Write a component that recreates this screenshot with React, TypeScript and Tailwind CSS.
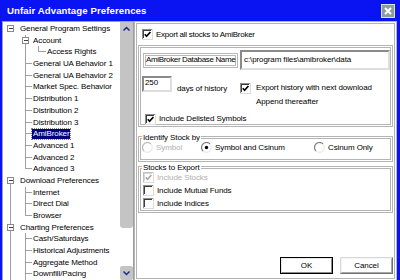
import React from 'react';

type Row = { t: string; l: 0 | 1 | 2; box?: boolean; last?: boolean; sel?: boolean };

const rows: Row[] = [
  { t: 'General Program Settings', l: 0, box: true },
  { t: 'Account', l: 1, box: true },
  { t: 'Access Rights', l: 2, last: true },
  { t: 'General UA Behavior 1', l: 1 },
  { t: 'General UA Behavior 2', l: 1 },
  { t: 'Market Spec. Behavior', l: 1 },
  { t: 'Distribution 1', l: 1 },
  { t: 'Distribution 2', l: 1 },
  { t: 'Distribution 3', l: 1 },
  { t: 'AmiBroker', l: 1, sel: true },
  { t: 'Advanced 1', l: 1 },
  { t: 'Advanced 2', l: 1 },
  { t: 'Advanced 3', l: 1, last: true },
  { t: 'Download Preferences', l: 0, box: true },
  { t: 'Internet', l: 1 },
  { t: 'Direct Dial', l: 1 },
  { t: 'Browser', l: 1, last: true },
  { t: 'Charting Preferences', l: 0, box: true },
  { t: 'Cash/Saturdays', l: 1 },
  { t: 'Historical Adjustments', l: 1 },
  { t: 'Aggregate Method', l: 1 },
  { t: 'Downfill/Pacing', l: 1 },
];

const LINE = '#a0a0a0';
const H = 11.7;

function TreeRow({ r, i }: { r: Row; i: number }) {
  const w = r.l === 0 ? 16 : r.l === 1 ? 29 : 43;
  const c = H / 2;
  const rootLine = i >= 13;
  return (
    <div className="flex items-center h-[11.7px]">
      <svg width={w} height={H} className="shrink-0" shapeRendering="crispEdges">
        {rootLine && (
          <line x1="7.5" x2="7.5" y1={i === 13 ? c : 0} y2={H} stroke={LINE} />
        )}
        {r.l >= 1 && (
          <line x1="22.5" x2="22.5" y1={0} y2={r.l === 1 && r.last ? c : H} stroke={LINE} />
        )}
        {r.l === 1 && !r.box && <line x1="22.5" x2="29" y1={c} y2={c} stroke={LINE} />}
        {r.l === 2 && (
          <>
            <line x1="35.5" x2="35.5" y1={0} y2={c} stroke={LINE} />
            <line x1="35.5" x2="43" y1={c} y2={c} stroke={LINE} />
          </>
        )}
        {r.box && (
          <g>
            <rect x={r.l === 0 ? 4.5 : 19.5} y={c - 3} width="6" height="6" fill="#fff" stroke="#8a8a8a" />
            <line x1={r.l === 0 ? 6 : 21} x2={r.l === 0 ? 10 : 25} y1={c} y2={c} stroke="#404040" />
          </g>
        )}
      </svg>
      {r.sel ? (
        <span className="bg-[#000080] text-white px-[1px] leading-[10px] outline-1 outline-dotted outline-[#808080]">
          {r.t}
        </span>
      ) : (
        <span className="ml-[1px] text-black">{r.t}</span>
      )}
    </div>
  );
}

function Check({ checked, disabled }: { checked?: boolean; disabled?: boolean }) {
  return (
    <svg width="11" height="11" viewBox="0 0 11 11" className="shrink-0" shapeRendering="crispEdges">
      <rect x="0.5" y="0.5" width="10" height="10" fill="#fff" stroke="#dcdcdc" />
      <path d="M0.5 10V0.5H10" fill="none" stroke={disabled ? '#c0c0c0' : '#8c8c8c'} />
      <path d="M1.5 9V1.5H9" fill="none" stroke={disabled ? '#d8d8d8' : '#3c3c3c'} />
      {checked && (
        <path
          d="M2.8 5.2L4.6 7.2L8.4 3"
          fill="none"
          stroke={disabled ? '#a8a8a8' : '#000'}
          strokeWidth="1.7"
          shapeRendering="auto"
        />
      )}
    </svg>
  );
}

function Radio({ checked, disabled }: { checked?: boolean; disabled?: boolean }) {
  return (
    <svg width="11" height="11" viewBox="0 0 11 11" className="shrink-0">
      <circle cx="5.5" cy="5.5" r="4.8" fill="#fff" stroke="#e2e2e2" />
      <path d="M9.04 1.96 A5 5 0 0 0 1.96 9.04" fill="none" stroke={disabled ? '#b8b8b8' : '#7a7a7a'} strokeWidth="1.1" />
      {checked && <circle cx="5.5" cy="5.5" r="1.7" fill="#000" />}
    </svg>
  );
}

function Chevron({ up }: { up?: boolean }) {
  return (
    <svg width="13" height="14" viewBox="0 0 13 14">
      <path
        d={up ? 'M3.5 8.5 L6.5 5.5 L9.5 8.5' : 'M3.5 5.5 L6.5 8.5 L9.5 5.5'}
        fill="none"
        stroke="#1a2a8a"
        strokeWidth="1.5"
      />
    </svg>
  );
}

export default function App() {
  return (
    <div className="w-[400px] h-[280px] bg-[#0a14f2] flex flex-col overflow-hidden font-['Liberation_Sans',Arial,sans-serif] text-[8px] tracking-[-0.1px] text-black whitespace-nowrap">
      {/* title bar */}
      <div className="h-[21px] shrink-0 flex items-center justify-between pl-[7px] pr-[5px] pt-[1px]">
        <span className="text-white font-bold text-[9.6px] tracking-[0.1px]">Unfair Advantage Preferences</span>
        <div className="w-[14px] h-[14px] border border-[#d8e4e4] bg-[#8d9e9e] flex items-center justify-center">
          <svg width="10" height="10" viewBox="0 0 10 10">
            <path d="M2 2L8 8M8 2L2 8" stroke="#fff" strokeWidth="1.9" />
          </svg>
        </div>
      </div>

      {/* body */}
      <div className="flex-1 flex ml-[2px] mr-[3px] mb-[3px] bg-white border-b border-[#000080]">
        {/* tree */}
        <div className="w-[132px] shrink-0 border border-[#a0a0a0] flex">
          <div className="flex-1 overflow-hidden pt-[1px] leading-[11.7px]">
            {rows.map((r, i) => (
              <TreeRow key={i} r={r} i={i} />
            ))}
          </div>
          <div className="w-[13px] shrink-0 flex flex-col">
            <div className="h-[14px] bg-[#c4c4c4]">
              <Chevron up />
            </div>
            <div className="h-[192px] bg-[#c4c4c4] rounded-b-[3px]" />
            <div className="flex-1 bg-white" />
            <div className="h-[14px] bg-[#c4c4c4] rounded-[2px]">
              <Chevron />
            </div>
          </div>
        </div>

        {/* right panel */}
        <div className="flex-1 flex flex-col border-[3px] border-double border-[#b4b4b4]">
          <div className="h-[21px] shrink-0 flex items-center pl-[5px] gap-[3px]">
            <Check checked />
            <span className="tracking-[-0.25px]">Export all stocks to AmiBroker</span>
          </div>

          <div className="mx-[1px] h-[82px] shrink-0 border-[3px] border-double border-[#b4b4b4] flex flex-col">
            <div className="mt-[2px] flex items-center h-[20px]">
              <div className="ml-[2px] w-[95px] h-[15px] border-[3px] border-double border-[#b8b8b8] flex items-center tracking-[-0.35px]">
                AmiBroker Database Name
              </div>
              <div className="ml-[2px] w-[150px] h-[20px] border-2 border-t-[#8a8a8a] border-l-[#8a8a8a] border-b-[#dedede] border-r-[#dedede] flex items-center pl-[2px]">
                {'c:\\program files\\amibroker\\data'}
              </div>
            </div>
            <div className="mt-[6px] flex">
              <div className="w-[99px] flex items-start">
                <div className="ml-[1px] w-[30px] h-[16px] border-2 border-t-[#8a8a8a] border-l-[#8a8a8a] border-b-[#dedede] border-r-[#dedede] pl-[1px] leading-[10px]">
                  250
                </div>
                <span className="ml-[5px] mt-[7px]">days of history</span>
              </div>
              <div className="flex flex-col mt-[6px]">
                <div className="flex items-center gap-[5px]">
                  <Check checked />
                  <span>Export history with next download</span>
                </div>
                <span className="ml-[16px] mt-[2px]">Append thereafter</span>
              </div>
            </div>
            <div className="mt-[5px] ml-[4px] flex items-center gap-[3px]">
              <Check checked />
              <span>Include Delisted Symbols</span>
            </div>
          </div>

          <fieldset className="mx-[1px] mt-[6px] border-[3px] border-double border-[#b4b4b4] pb-[6px]">
            <legend className="ml-[1px] px-[1px] leading-[9px]">Identify Stock by</legend>
            <div className="flex items-center h-[11px]">
              <div className="ml-[1px] w-[59px] flex items-center gap-[3px] text-[#b0b0b0]">
                <Radio disabled />
                <span>Symbol</span>
              </div>
              <div className="w-[113px] flex items-center gap-[3px]">
                <Radio checked />
                <span>Symbol and Csinum</span>
              </div>
              <div className="flex items-center gap-[3px]">
                <Radio />
                <span>Csinum Only</span>
              </div>
            </div>
          </fieldset>

          <fieldset className="mx-[1px] mt-[1px] border-[3px] border-double border-[#b4b4b4]">
            <legend className="ml-[1px] px-[1px] leading-[9px]">Stocks to Export</legend>
            <div className="flex flex-col pl-[2px] -mt-[1px]">
              <div className="h-[13px] flex items-center gap-[3px] text-[#b0b0b0]">
                <Check checked disabled />
                <span>Include Stocks</span>
              </div>
              <div className="h-[13px] flex items-center gap-[3px]">
                <Check />
                <span>Include Mutual Funds</span>
              </div>
              <div className="h-[13px] flex items-center gap-[3px]">
                <Check />
                <span>Include Indices</span>
              </div>
            </div>
          </fieldset>

          <div className="flex-1" />
          <div className="flex justify-end gap-[7px] pr-[1px] pb-[4px]">
            <div className="w-[53px] h-[17px] border border-black">
              <div className="w-full h-full border border-t-[#e8e8e8] border-l-[#e8e8e8] border-b-[#8a8a8a] border-r-[#8a8a8a] bg-white flex items-center justify-center">
                OK
              </div>
            </div>
            <div className="w-[53px] h-[17px] border border-t-[#d8d8d8] border-l-[#d8d8d8] border-b-[#707070] border-r-[#707070]">
              <div className="w-full h-full border border-t-[#f4f4f4] border-l-[#f4f4f4] border-b-[#a8a8a8] border-r-[#a8a8a8] bg-white flex items-center justify-center">
                Cancel
              </div>
            </div>
          </div>
        </div>
      </div>
    </div>
  );
}
